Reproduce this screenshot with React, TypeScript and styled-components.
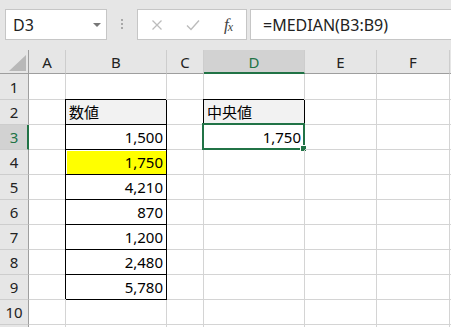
import React from 'react'
import styled, { createGlobalStyle, css } from 'styled-components'

const GREEN = '#217346'

const GlobalStyle = createGlobalStyle`
  html, body {
    margin: 0;
    padding: 0;
    background: #fff;
    overflow: hidden;
  }
  body {
    font-family: "Noto Sans", "Noto Sans CJK JP", sans-serif;
  }
`

const Window = styled.div`
  width: 451px;
  height: 327px;
  overflow: hidden;
  background: #fff;
`

const FormulaBar = styled.div`
  height: 50px;
  box-sizing: border-box;
  background: #e6e6e6;
  display: flex;
  align-items: flex-start;
  padding: 9px 0 0 5px;
`

const NameBox = styled.div`
  width: 102px;
  height: 31px;
  box-sizing: border-box;
  background: #fff;
  border: 1px solid #c6c6c6;
  display: flex;
  align-items: center;
  justify-content: space-between;
  padding: 0 5px 0 7px;
  font-size: 16px;
  color: #222;
`

const DropArrow = styled.span`
  width: 0;
  height: 0;
  border-left: 4px solid transparent;
  border-right: 4px solid transparent;
  border-top: 4px solid #777;
`

const Grip = styled.div`
  width: 2px;
  margin: 10px 14px 0 14px;
  display: flex;
  flex-direction: column;
  gap: 2px;
  span {
    width: 2px;
    height: 2px;
    background: #a8a8a8;
  }
`

const FxBox = styled.div`
  width: 110px;
  height: 31px;
  box-sizing: border-box;
  background: #fff;
  border: 1px solid #c6c6c6;
  display: flex;
  align-items: center;
  padding-left: 13px;
  gap: 23px;
  margin-right: 3px;
`

const FxLabel = styled.span`
  font-family: "Liberation Serif", serif;
  font-style: italic;
  font-size: 17px;
  color: #444;
  margin-left: 1px;
  letter-spacing: -1px;
  small {
    font-size: 12px;
    vertical-align: -1px;
  }
`

const FormulaInput = styled.div`
  flex: 1;
  height: 31px;
  box-sizing: border-box;
  background: #fff;
  border: 1px solid #c6c6c6;
  border-right: none;
  display: flex;
  align-items: center;
  padding-left: 12px;
  font-size: 16px;
  color: #222;
`

const Sheet = styled.div`
  display: grid;
  grid-template-columns: 29px 37px 101px 37px 101px 72px 73px 1fr;
  grid-template-rows: 24px 26px repeat(10, 25px);
  font-size: 15px;
`

const Corner = styled.div`
  background: #e6e6e6;
  border-right: 1px solid #9e9e9e;
  border-bottom: 1px solid #9e9e9e;
  box-sizing: border-box;
  display: flex;
  justify-content: flex-end;
  align-items: flex-end;
  padding: 0 2px 2px 0;
`

const Triangle = styled.span`
  width: 0;
  height: 0;
  border-left: 17px solid transparent;
  border-bottom: 16px solid #b8b8b8;
`

const ColHeader = styled.div<{ $active?: boolean }>`
  box-sizing: border-box;
  background: ${(p) => (p.$active ? '#d2d2d2' : '#e6e6e6')};
  border-right: 1px solid #cdcdcd;
  border-bottom: ${(p) => (p.$active ? `2px solid ${GREEN}` : '1px solid #9e9e9e')};
  color: ${(p) => (p.$active ? GREEN : '#222')};
  display: flex;
  align-items: center;
  justify-content: center;
  padding-top: ${(p) => (p.$active ? '1px' : '0')};
`

const RowHeader = styled.div<{ $active?: boolean }>`
  box-sizing: border-box;
  background: ${(p) => (p.$active ? '#d2d2d2' : '#e6e6e6')};
  border-right: ${(p) => (p.$active ? `2px solid ${GREEN}` : '1px solid #9e9e9e')};
  border-bottom: 1px solid #cdcdcd;
  color: ${(p) => (p.$active ? GREEN : '#222')};
  display: flex;
  align-items: center;
  justify-content: center;
  padding-left: ${(p) => (p.$active ? '1px' : '0')};
`

const Cell = styled.div<{
  $boxed?: boolean
  $fill?: 'gray' | 'yellow'
  $align?: 'left' | 'right'
}>`
  position: relative;
  box-sizing: border-box;
  border-right: 1px solid #d4d4d4;
  border-bottom: 1px solid #d4d4d4;
  display: flex;
  align-items: center;
  justify-content: ${(p) => (p.$align === 'left' ? 'flex-start' : 'flex-end')};
  padding: 0 3px 1px 3px;
  color: #000;
  white-space: nowrap;
  ${(p) =>
    p.$boxed &&
    css`
      border-right-color: #000;
      border-bottom-color: #000;
      box-shadow: -1px -1px 0 0 #000;
    `}
  ${(p) =>
    p.$fill === 'gray' &&
    css`
      background: #f2f2f2;
    `}
  ${(p) =>
    p.$fill === 'yellow' &&
    css`
      background: #ffff00;
      box-shadow: -1px -1px 0 0 #000, inset 1px 1px 0 0 #fff;
    `}
`

const Selection = styled.span`
  position: absolute;
  left: -2px;
  top: -2px;
  right: -1px;
  bottom: -1px;
  border: 2px solid ${GREEN};
  pointer-events: none;
`

const FillHandle = styled.span`
  position: absolute;
  right: -4px;
  bottom: -4px;
  width: 5px;
  height: 5px;
  background: ${GREEN};
  border: 1px solid #fff;
`

type CellData = {
  text?: string
  boxed?: boolean
  fill?: 'gray' | 'yellow'
  align?: 'left' | 'right'
  selected?: boolean
}

const columns = ['A', 'B', 'C', 'D', 'E', 'F', '']

const values: { [key: string]: CellData } = {
  B2: { text: '数値', boxed: true, fill: 'gray', align: 'left' },
  D2: { text: '中央値', boxed: true, fill: 'gray', align: 'left' },
  B3: { text: '1,500', boxed: true },
  D3: { text: '1,750', boxed: true, selected: true },
  B4: { text: '1,750', boxed: true, fill: 'yellow' },
  B5: { text: '4,210', boxed: true },
  B6: { text: '870', boxed: true },
  B7: { text: '1,200', boxed: true },
  B8: { text: '2,480', boxed: true },
  B9: { text: '5,780', boxed: true },
}

const CrossIcon = () => (
  <svg width="12" height="12" viewBox="0 0 12 12">
    <path d="M1.5 1.5 L10.5 10.5 M10.5 1.5 L1.5 10.5" stroke="#bcbcbc" strokeWidth="1.3" fill="none" />
  </svg>
)

const CheckIcon = () => (
  <svg width="14" height="12" viewBox="0 0 14 12">
    <path d="M1 6.5 L5 10.5 L13 1.5" stroke="#bcbcbc" strokeWidth="1.4" fill="none" />
  </svg>
)

export default function App() {
  // row 11 only peeks in at the bottom edge, so its number is left off
  const rows = Array.from({ length: 11 }, (_, i) => i + 1)

  return (
    <Window>
      <GlobalStyle />
      <FormulaBar>
        <NameBox>
          D3
          <DropArrow />
        </NameBox>
        <Grip>
          <span />
          <span />
          <span />
        </Grip>
        <FxBox>
          <CrossIcon />
          <CheckIcon />
          <FxLabel>
            f<small>x</small>
          </FxLabel>
        </FxBox>
        <FormulaInput>=MEDIAN(B3:B9)</FormulaInput>
      </FormulaBar>

      <Sheet>
        <Corner>
          <Triangle />
        </Corner>
        {columns.map((col, i) => (
          <ColHeader key={i} $active={col === 'D'}>
            {col}
          </ColHeader>
        ))}
        {rows.map((row) => (
          <React.Fragment key={row}>
            <RowHeader $active={row === 3}>{row <= 10 ? row : ''}</RowHeader>
            {columns.map((col, i) => {
              const data = values[`${col}${row}`] || {}
              return (
                <Cell key={i} $boxed={data.boxed} $fill={data.fill} $align={data.align}>
                  {data.text}
                  {data.selected && (
                    <Selection>
                      <FillHandle />
                    </Selection>
                  )}
                </Cell>
              )
            })}
          </React.Fragment>
        ))}
      </Sheet>
    </Window>
  )
}
